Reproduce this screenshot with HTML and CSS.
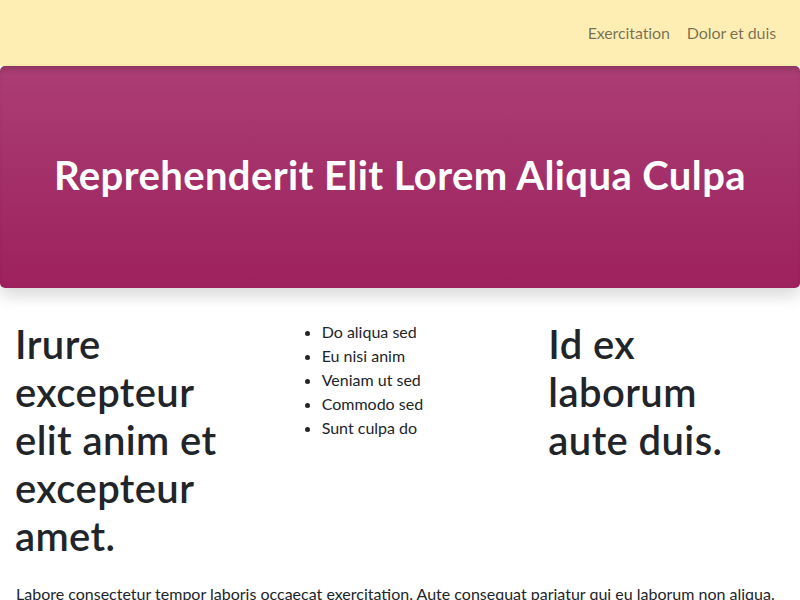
FILE: index.html
```html
<!DOCTYPE html>
<html lang="en">
<head>
<meta charset="utf-8">
<title>Page</title>
<link rel="stylesheet" href="styles.css">
</head>
<body>
<header class="navbar">
  <nav class="nav">
    <a class="nav-link" href="#">Exercitation</a>
    <a class="nav-link" href="#">Dolor et duis</a>
  </nav>
</header>
<section class="hero">
  <h1 class="hero-title">Reprehenderit Elit Lorem Aliqua Culpa</h1>
</section>
<main class="content">
  <div class="cols">
    <h1 class="col-title">Irure excepteur elit anim et excepteur amet.</h1>
    <ul class="col-list">
      <li>Do aliqua sed</li>
      <li>Eu nisi anim</li>
      <li>Veniam ut sed</li>
      <li>Commodo sed</li>
      <li>Sunt culpa do</li>
    </ul>
    <h1 class="col-title">Id ex laborum aute duis.</h1>
  </div>
  <p class="lead-text">Labore consectetur tempor laboris occaecat exercitation. Aute consequat pariatur qui eu laborum non aliqua.</p>
</main>
</body>
</html>
```
FILE: styles.css
```css
* { box-sizing: border-box; }
html, body { margin: 0; padding: 0; }
body {
  font-family: Lato, "Open Sans", sans-serif;
  font-size: 16px;
  line-height: 1.5;
  color: #212529;
  background: #fff;
}
.navbar {
  background: #ffeeb3;
  height: 66px;
  display: flex;
  align-items: center;
  justify-content: flex-end;
  padding: 0 16px;
}
.nav { display: flex; gap: 1px; }
.nav-link {
  color: rgba(0, 0, 0, 0.55);
  text-decoration: none;
  padding: 8px;
  letter-spacing: -0.1px;
}
.hero {
  height: 222px;
  padding-bottom: 4px;
  border-radius: 5px;
  background: linear-gradient(to bottom, #ab3e74, #9d215d);
  box-shadow: inset 0 6px 6px -3px rgba(0, 0, 0, 0.18), 0 8px 16px rgba(0, 0, 0, 0.15);
  display: flex;
  align-items: center;
  justify-content: center;
}
.hero-title {
  margin: 0;
  color: #fff;
  font-size: 40px;
  font-weight: 700;
  line-height: 1.2;
  letter-spacing: 0.4px;
}
.content { padding: 32px 15px 0; }
.cols {
  display: grid;
  grid-template-columns: repeat(3, 1fr);
  column-gap: 30px;
  align-items: start;
}
.col-title {
  margin: 0 0 8px;
  font-size: 40px;
  font-weight: 600;
  line-height: 1.2;
  letter-spacing: 0.4px;
}
.col-list {
  margin: 0 0 16px;
  padding-left: 40px;
}
.lead-text { margin: 14px 0 16px 1px; }
```
